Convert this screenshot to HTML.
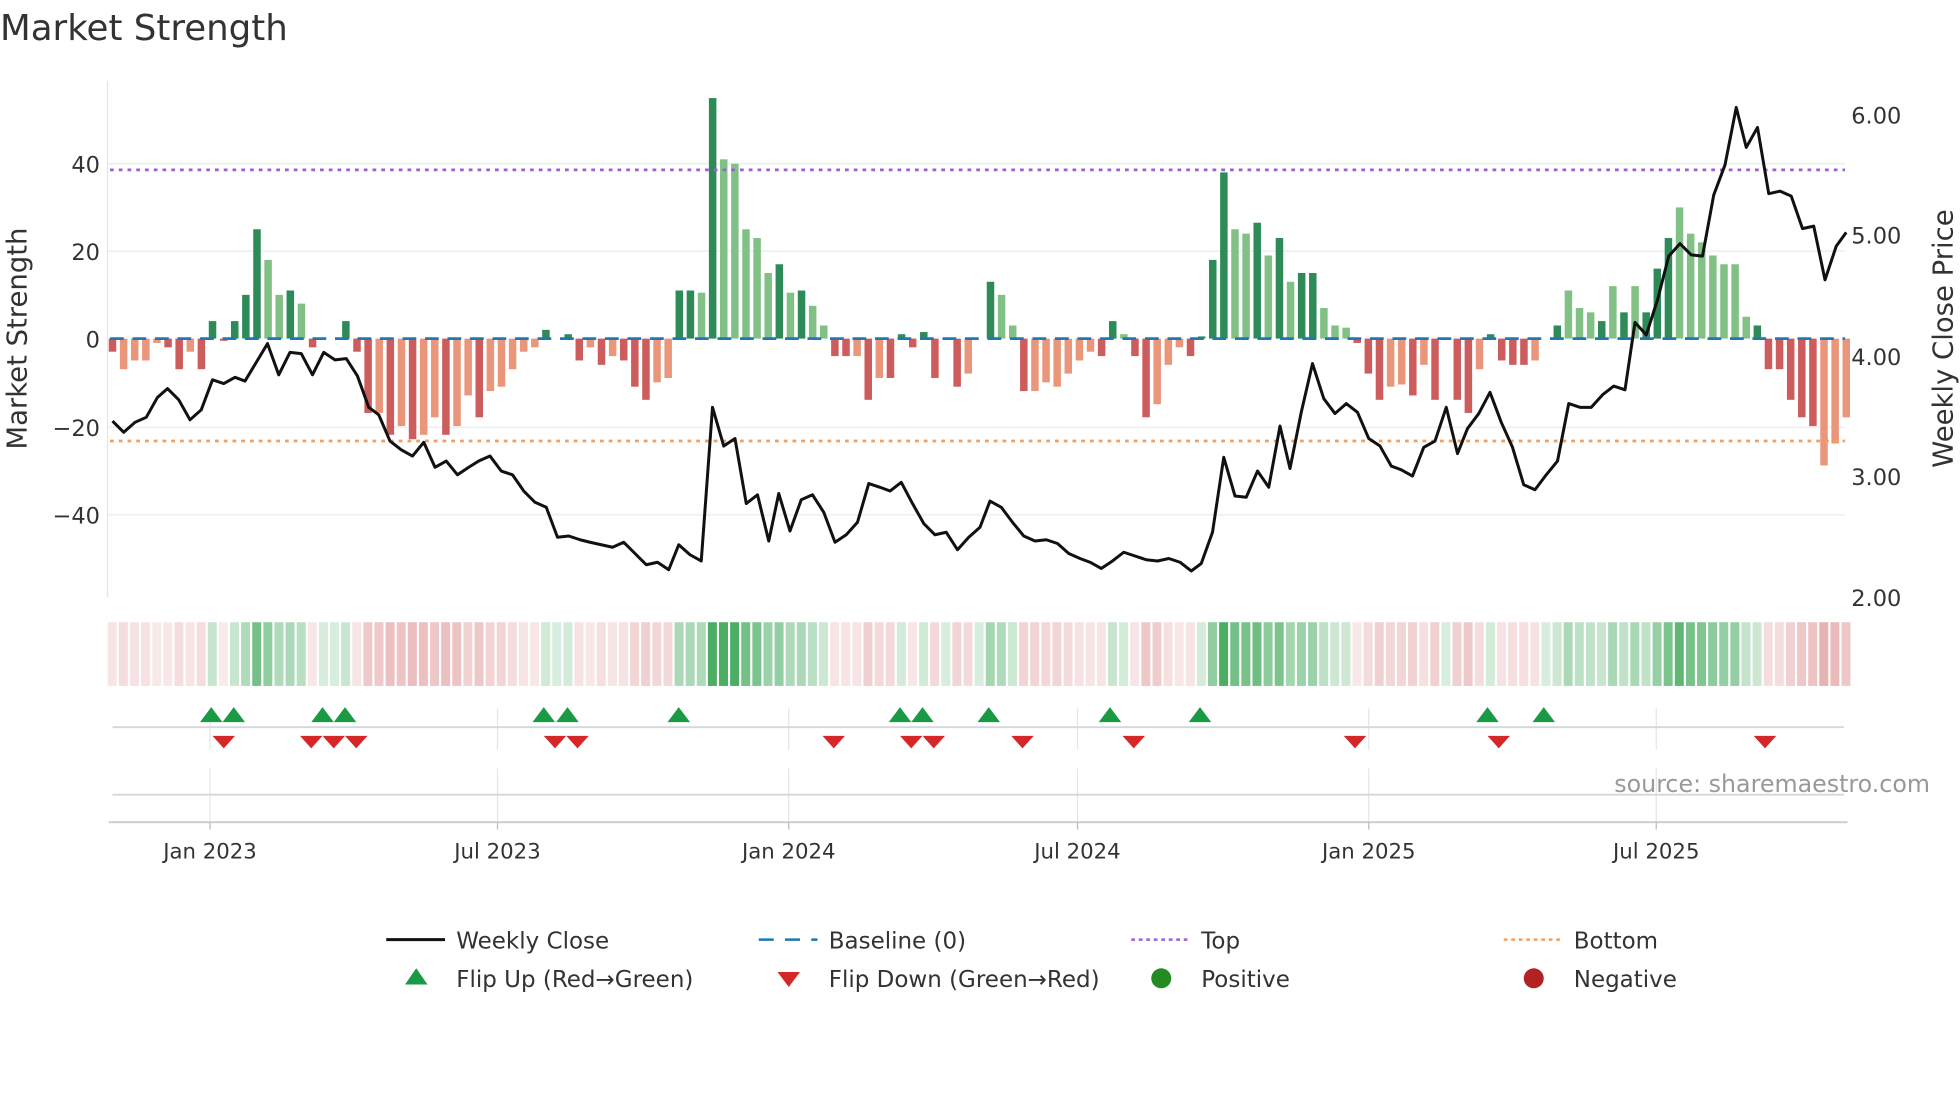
<!DOCTYPE html>
<html><head><meta charset="utf-8"><style>
html,body{margin:0;padding:0;background:#fff;overflow:hidden}
svg{display:block}
text{font-family:"DejaVu Sans","Liberation Sans",sans-serif;fill:#333}
</style></head><body>
<svg id="s" width="1960" height="1102" viewBox="0 0 1568 882" preserveAspectRatio="none" xmlns="http://www.w3.org/2000/svg">
<rect width="1568" height="882" fill="#fff"/>
<text x="0" y="32" font-size="28.5" fill="#333">Market Strength</text>
<g stroke="#eef0f3" stroke-width="1.5">
<line x1="86" y1="131" x2="1476" y2="131"/><line x1="86" y1="201" x2="1476" y2="201"/>
<line x1="86" y1="342" x2="1476" y2="342"/><line x1="86" y1="412" x2="1476" y2="412"/>
</g>
<line x1="86" y1="65" x2="86" y2="478" stroke="#e6e6e6" stroke-width="1"/>
<g id="bars"></g>
<line x1="88" y1="271" x2="1476" y2="271" stroke="#1f77b4" stroke-width="2.2" stroke-dasharray="11,7"/>
<line x1="88" y1="136" x2="1476" y2="136" stroke="#9b5fd6" stroke-width="2.2" stroke-dasharray="3,4"/>
<line x1="88" y1="353" x2="1476" y2="353" stroke="#f0a060" stroke-width="2.2" stroke-dasharray="3,4"/>
<polyline id="price" fill="none" stroke="#111" stroke-width="2.4" stroke-linejoin="round"/>
<g font-size="18" text-anchor="end">
<text x="80" y="138">40</text><text x="80" y="208">20</text><text x="80" y="278">0</text>
<text x="80" y="349">−20</text><text x="80" y="419">−40</text>
</g>
<g font-size="18">
<text x="1481" y="99">6.00</text><text x="1481" y="195">5.00</text><text x="1481" y="292">4.00</text>
<text x="1481" y="388">3.00</text><text x="1481" y="485">2.00</text>
</g>
<text transform="translate(21,271) rotate(-90)" font-size="22" text-anchor="middle">Market Strength</text>
<text transform="translate(1562,271) rotate(-90)" font-size="22" text-anchor="middle">Weekly Close Price</text>
<g id="strip"></g>
<g stroke="#e3e6ea" stroke-width="1">
<line x1="168" y1="567" x2="168" y2="600"/><line x1="398" y1="567" x2="398" y2="600"/><line x1="631" y1="567" x2="631" y2="600"/><line x1="862" y1="567" x2="862" y2="600"/><line x1="1095" y1="567" x2="1095" y2="600"/><line x1="1325" y1="567" x2="1325" y2="600"/>
<line x1="168" y1="615" x2="168" y2="658"/><line x1="398" y1="615" x2="398" y2="658"/><line x1="631" y1="615" x2="631" y2="658"/><line x1="862" y1="615" x2="862" y2="658"/><line x1="1095" y1="615" x2="1095" y2="658"/><line x1="1325" y1="615" x2="1325" y2="658"/>
</g>
<line x1="90" y1="582" x2="1475" y2="582" stroke="#d4d7db" stroke-width="1.5"/>
<line x1="90" y1="636" x2="1475" y2="636" stroke="#d4d7db" stroke-width="1.5"/>
<line x1="87" y1="658" x2="1478" y2="658" stroke="#cccccc" stroke-width="1.5"/>
<g stroke="#bbb" stroke-width="1"><line x1="168" y1="658" x2="168" y2="664"/><line x1="398" y1="658" x2="398" y2="664"/><line x1="631" y1="658" x2="631" y2="664"/><line x1="862" y1="658" x2="862" y2="664"/><line x1="1095" y1="658" x2="1095" y2="664"/><line x1="1325" y1="658" x2="1325" y2="664"/></g>
<g id="marks"></g>
<text x="1544" y="634" font-size="19" fill="#999" text-anchor="end" style="fill:#999">source: sharemaestro.com</text>
<g font-size="17" text-anchor="middle">
<text x="168" y="687">Jan 2023</text><text x="398" y="687">Jul 2023</text><text x="631" y="687">Jan 2024</text>
<text x="862" y="687">Jul 2024</text><text x="1095" y="687">Jan 2025</text><text x="1325" y="687">Jul 2025</text>
</g>
<g font-size="18.4">
<line x1="309" y1="752" x2="356" y2="752" stroke="#111" stroke-width="2.4"/><text x="365" y="759">Weekly Close</text>
<line x1="607" y1="752" x2="654" y2="752" stroke="#1f77b4" stroke-width="2" stroke-dasharray="12,9"/><text x="663" y="759">Baseline (0)</text>
<line x1="905" y1="752" x2="952" y2="752" stroke="#9b5fd6" stroke-width="2" stroke-dasharray="3,3"/><text x="961" y="759">Top</text>
<line x1="1203" y1="752" x2="1250" y2="752" stroke="#f0a060" stroke-width="2" stroke-dasharray="3,3"/><text x="1259" y="759">Bottom</text>
<polygon points="324,788 342,788 333,775" fill="#1a9a45"/><text x="365" y="790">Flip Up (Red→Green)</text>
<polygon points="622,778 640,778 631,790" fill="#d62728"/><text x="663" y="790">Flip Down (Green→Red)</text>
<circle cx="929" cy="783" r="8" fill="#228b22"/><text x="961" y="790">Positive</text>
<circle cx="1227" cy="783" r="8" fill="#b22222"/><text x="1259" y="790">Negative</text>
</g>
</svg>
<script>
var v=[-3,-7,-5,-5,-1,-2,-7,-3,-7,4,-0.5,4,10,25,18,10,11,8,-2,0,0,4,-3,-17,-17,-22,-20,-23,-22,-18,-22,-20,-13,-18,-12,-11,-7,-3,-2,2,0,1,-5,-2,-6,-4,-5,-11,-14,-10,-9,11,11,10.5,55,41,40,25,23,15,17,10.5,11,7.5,3,-4,-4,-4,-14,-9,-9,1,-2,1.5,-9,0,-11,-8,0,13,10,3,-12,-12,-10,-11,-8,-5,-3,-4,4,1,-4,-18,-15,-6,-2,-4,0.5,18,38,25,24,26.5,19,23,13,15,15,7,3,2.5,-1,-8,-14,-11,-10.5,-13,-6,-14,0,-14,-17,-7,1,-5,-6,-6,-5,0,3,11,7,6,4,12,6,12,6,16,23,30,24,22,19,17,17,5,3,-7,-7,-14,-18,-20,-29,-24,-18];
var dark=[1,0,0,0,0,1,1,0,1,1,1,1,1,1,0,0,1,0,1,1,1,1,1,1,0,1,0,1,0,0,1,0,0,1,0,0,0,0,0,1,1,1,1,0,1,0,1,1,1,0,0,1,1,0,1,0,0,0,0,0,1,0,1,0,0,1,1,0,1,0,1,1,1,1,1,1,1,0,1,1,0,0,1,0,0,0,0,0,0,1,1,0,1,1,0,0,0,1,1,1,1,0,0,1,0,1,0,1,1,0,0,0,1,1,1,0,0,1,0,1,1,1,1,0,1,1,1,1,0,1,1,0,0,0,1,0,1,0,1,1,1,0,0,0,0,0,0,0,1,1,1,1,1,1,0,0];
var n=v.length,x0=90,dx=(1477-90)/(n-1),ns="http://www.w3.org/2000/svg";
function el(t,a,p){var e=document.createElementNS(ns,t);for(var k in a)e.setAttribute(k,a[k]);p.appendChild(e);return e;}
var B=document.getElementById('bars'),S=document.getElementById('strip'),M=document.getElementById('marks');
for(var i=0;i<n;i++){var x=x0+i*dx,val=v[i],h=Math.abs(val)*3.5,d=dark[i];
 var c=val>=0?(d?'#2e8b57':'#82c185'):(d?'#cd5c5c':'#e9967a');
 if(h>0.5)el('rect',{x:x-3,y:val>=0?271-h:271,width:6,height:h,fill:c},B);
 var a=Math.min(1,0.22+Math.abs(val)/45);
 el('rect',{x:x-3.8,y:498,width:7.2,height:51,fill:val>=0?'#2ca048':'#cd5c5c','fill-opacity':(val>=0?a*0.85:a*0.55)},S);}
var p=[90,337,99,346,108,338,117,334,126,318,134,311,143,320,152,336,161,328,170,304,179,307,188,302,196,305,205,290,214,275,223,300,232,282,241,283,250,300,259,282,268,288,277,287,286,301,295,326,303,332,312,353,321,360,330,365,339,354,348,374,357,369,366,380,375,374,383,369,392,365,401,377,410,380,419,393,428,402,437,406,446,430,455,429,464,432,472,434,481,436,490,438,499,434,508,443,517,452,526,450,535,456,543,436,552,444,561,449,570,326,579,357,588,351,597,403,606,396,615,433,623,395,632,425,641,400,650,396,659,410,668,434,677,428,686,418,695,387,704,390,712,393,721,386,730,403,739,419,748,428,757,426,766,440,775,430,784,422,792,401,801,406,810,418,819,429,828,433,837,432,846,435,855,443,864,447,872,450,881,455,890,449,899,442,908,445,917,448,926,449,935,447,944,450,953,457,961,451,970,426,979,366,988,397,997,398,1006,377,1015,390,1024,341,1032,375,1041,330,1050,291,1059,319,1068,331,1077,323,1086,330,1095,351,1104,357,1113,373,1121,376,1130,381,1139,358,1148,353,1157,326,1166,363,1174,343,1183,331,1192,314,1201,338,1210,358,1219,388,1228,392,1237,380,1246,369,1255,323,1264,326,1273,326,1282,316,1291,309,1300,312,1308,258,1317,268,1326,240,1335,205,1344,195,1353,204,1362,205,1371,156,1380,132,1389,86,1397,118,1406,102,1415,155,1424,153,1433,157,1442,183,1451,181,1460,224,1469,197,1477,186];
var s='';for(var j=0;j<p.length;j+=2)s+=p[j]+','+p[j+1]+' ';document.getElementById('price').setAttribute('points',s);
[169,187,258,276,435,454,543,720,738,791,888,960,1190,1235].forEach(function(x){el('polygon',{points:(x-9)+',578 '+(x+9)+',578 '+x+',566',fill:'#1a9a45'},M);});
[179,249,267,285,444,462,667,729,747,818,907,1084,1199,1412].forEach(function(x){el('polygon',{points:(x-9)+',589 '+(x+9)+',589 '+x+',599',fill:'#d62728'},M);});
</script>
</body></html>
